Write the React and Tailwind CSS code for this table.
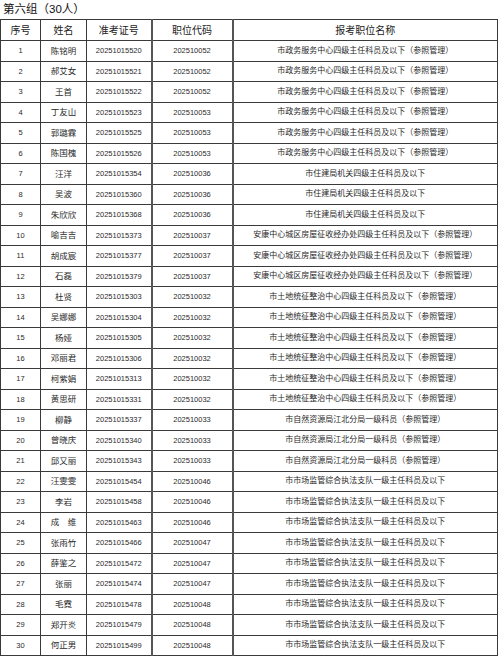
const groups = [
  { code: "202510052", title: "市政务服务中心四级主任科员及以下（参照管理）" },
  { code: "202510053", title: "市政务服务中心四级主任科员及以下（参照管理）" },
  { code: "202510036", title: "市住建局机关四级主任科员及以下" },
  { code: "202510037", title: "安康中心城区房屋征收经办处四级主任科员及以下（参照管理）" },
  { code: "202510032", title: "市土地统征整治中心四级主任科员及以下（参照管理）" },
  { code: "202510033", title: "市自然资源局江北分局一级科员（参照管理）" },
  { code: "202510046", title: "市市场监管综合执法支队一级主任科员及以下" },
  { code: "202510047", title: "市市场监管综合执法支队一级主任科员及以下" },
  { code: "202510048", title: "市市场监管综合执法支队一级主任科员及以下" },
];

// [name, ticket suffix, group index]
const rows = [
  ["陈铭明", "5520", 0],
  ["郝艾女", "5521", 0],
  ["王首", "5522", 0],
  ["丁友山", "5523", 1],
  ["郭璐霖", "5525", 1],
  ["陈国槐", "5526", 1],
  ["汪洋", "5354", 2],
  ["吴波", "5360", 2],
  ["朱欣欣", "5368", 2],
  ["喻吉吉", "5373", 3],
  ["胡成宸", "5377", 3],
  ["石磊", "5379", 3],
  ["杜贤", "5303", 4],
  ["吴娜娜", "5304", 4],
  ["杨娅", "5305", 4],
  ["邓丽君", "5306", 4],
  ["柯紫娟", "5313", 4],
  ["黄思研", "5331", 4],
  ["柳静", "5337", 5],
  ["曾晓庆", "5340", 5],
  ["邱又丽", "5343", 5],
  ["汪雯雯", "5454", 6],
  ["李岩", "5458", 6],
  ["成　维", "5463", 6],
  ["张雨竹", "5466", 7],
  ["薛鉴之", "5472", 7],
  ["张丽", "5474", 7],
  ["毛霓", "5478", 8],
  ["郑开炎", "5479", 8],
  ["何正男", "5499", 8],
];

const cell = "border border-[#3a3a3a] text-center align-middle p-0 whitespace-nowrap";

export default function App() {
  return (
    <div
      className="w-[500px] h-[656px] bg-white overflow-hidden text-[#2a2a2a]"
      style={{ fontFamily: '"Liberation Sans", "Noto Sans CJK SC", sans-serif' }}
    >
      <div className="h-[19px] pl-[3px] flex items-center text-[11.5px] text-[#111] leading-none">
        第六组（30人）
      </div>
      <table className="w-[498px] table-fixed border-collapse">
        <colgroup>
          <col className="w-[40px]" />
          <col className="w-[46px]" />
          <col className="w-[65px]" />
          <col className="w-[81px]" />
          <col />
        </colgroup>
        <thead>
          <tr className="h-[21px] text-[10px] text-[#222]">
            <th className={`${cell} font-normal`}>序号</th>
            <th className={`${cell} font-normal`}>姓名</th>
            <th className={`${cell} font-normal`}>准考证号</th>
            <th className={`${cell} font-normal border-x-2 border-x-[#555]`}>职位代码</th>
            <th className={`${cell} font-normal`}>报考职位名称</th>
          </tr>
        </thead>
        <tbody>
          {rows.map(([name, id, g], i) => (
            <tr key={i} className="h-[20.5px] leading-none">
              <td className={`${cell} text-[7.5px]`}>{i + 1}</td>
              <td className={`${cell} text-[8.5px]`}>{name}</td>
              <td className={`${cell} text-[7.5px]`}>2025101{id}</td>
              <td className={`${cell} text-[7.5px] border-x-2 border-x-[#555]`}>{groups[g].code}</td>
              <td className={`${cell} text-[8px]`}>{groups[g].title}</td>
            </tr>
          ))}
        </tbody>
      </table>
    </div>
  );
}
